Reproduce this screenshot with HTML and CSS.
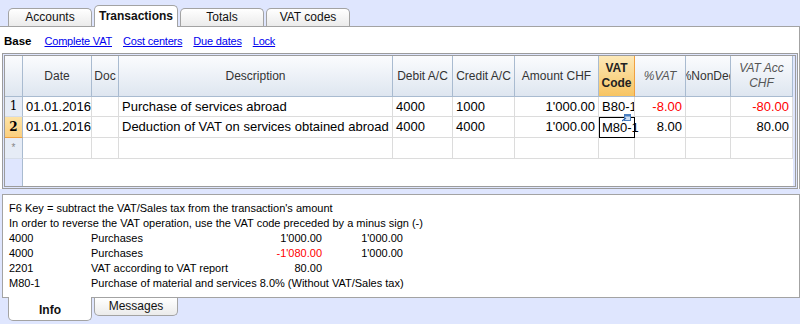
FILE: index.html
```html
<!DOCTYPE html>
<html lang="en">

<head>
    <meta charset="UTF-8">
    <title>Transactions</title>
    <link rel="stylesheet" href="styles.css">
</head>

<body>
    <!-- Pestañas superiores -->
    <div class="tabs top-tabs">
        <div class="tab">Accounts</div>
        <div class="tab active">Transactions</div>
        <div class="tab">Totals</div>
        <div class="tab">VAT codes</div>
    </div>

    <div class="panel">
        <div class="views">
            <b>Base</b>
            <a href="#">Complete VAT</a>
            <a href="#">Cost centers</a>
            <a href="#">Due dates</a>
            <a href="#">Lock</a>
        </div>

        <div class="grid">
            <div class="row head">
                <div class="rn"></div>
                <div class="c">Date</div>
                <div class="c">Doc</div>
                <div class="c">Description</div>
                <div class="c">Debit A/C</div>
                <div class="c">Credit A/C</div>
                <div class="c">Amount CHF</div>
                <div class="c cur">VAT<br>Code</div>
                <div class="c it">%VAT</div>
                <div class="c clip"><span>%NonDed</span></div>
                <div class="c it">VAT Acc<br>CHF</div>
            </div>
            <div class="row">
                <div class="rn">1</div>
                <div class="c">01.01.2016</div>
                <div class="c"></div>
                <div class="c">Purchase of services abroad</div>
                <div class="c">4000</div>
                <div class="c">1000</div>
                <div class="c num">1'000.00</div>
                <div class="c">B80-1</div>
                <div class="c num neg">-8.00</div>
                <div class="c"></div>
                <div class="c num neg">-80.00</div>
            </div>
            <div class="row">
                <div class="rn cur-row">2</div>
                <div class="c">01.01.2016</div>
                <div class="c"></div>
                <div class="c">Deduction of VAT on services obtained abroad</div>
                <div class="c">4000</div>
                <div class="c">4000</div>
                <div class="c num">1'000.00</div>
                <div class="c sel">M80-1
                    <svg class="cell-icon" width="9" height="8" viewBox="0 0 9 8">
                        <rect x="2.5" y="0.5" width="6" height="6" fill="#cfe0f4" stroke="#4a7fc0" />
                        <rect x="3" y="1" width="5" height="1.5" fill="#4a7fc0" />
                        <path d="M0 7 L4 4" stroke="#2a62b0" stroke-width="1.2" />
                    </svg>
                </div>
                <div class="c num">8.00</div>
                <div class="c"></div>
                <div class="c num">80.00</div>
            </div>
            <div class="row">
                <div class="rn star">*</div>
                <div class="c"></div>
                <div class="c"></div>
                <div class="c"></div>
                <div class="c"></div>
                <div class="c"></div>
                <div class="c"></div>
                <div class="c"></div>
                <div class="c"></div>
                <div class="c"></div>
                <div class="c"></div>
            </div>
            <div class="filler">
                <div class="rn"></div>
                <div></div>
            </div>
        </div>
    </div>

    <!-- Panel de información -->
    <div class="info">
        <div class="line">F6 Key = subtract the VAT/Sales tax from the transaction's amount</div>
        <div class="line">In order to reverse the VAT operation, use the VAT code preceded by a minus sign (-)</div>
        <div class="info-row">
            <span>4000</span><span>Purchases</span><span class="num">1'000.00</span><span class="num">1'000.00</span>
        </div>
        <div class="info-row">
            <span>4000</span><span>Purchases</span><span class="num neg">-1'080.00</span><span class="num">1'000.00</span>
        </div>
        <div class="info-row">
            <span>2201</span><span>VAT according to VAT report</span><span class="num">80.00</span><span></span>
        </div>
        <div class="info-row">
            <span>M80-1</span><span class="wide">Purchase of material and services 8.0% (Without VAT/Sales tax)</span>
        </div>
    </div>

    <div class="tabs bottom-tabs">
        <div class="tab active">Info</div>
        <div class="tab">Messages</div>
    </div>
</body>

</html>
```

FILE: styles.css
```css
/* Estilos generales */
body {
    margin: 0;
    background-color: #dfe6fe;
    font-family: 'Liberation Sans', Arial, sans-serif;
    font-size: 11px;
    color: #000;
    width: 800px;
    height: 324px;
    overflow: hidden;
}

/* Pestañas */
.tabs {
    display: flex;
    gap: 2px;
    padding-left: 8px;
}

.top-tabs {
    height: 26px;
    align-items: flex-end;
}

.tab {
    width: 84px;
    box-sizing: border-box;
    border: 1px solid #a3a3a3;
    background: linear-gradient(#ffffff, #ebebeb);
    text-align: center;
    font-size: 12px;
    color: #111;
}

.top-tabs .tab {
    height: 18px;
    line-height: 17px;
    border-bottom: none;
    border-radius: 5px 5px 0 0;
}

.top-tabs .tab.active {
    height: 22px;
    line-height: 20px;
    margin-bottom: -1px;
    background: #fff;
    font-weight: bold;
    font-size: 12px;
    position: relative;
    z-index: 2;
}

/* Panel principal */
.panel {
    background-color: #fff;
    border-top: 1px solid #a3a3a3;
    border-right: 1px solid #a3a3a3;
    width: 799px;
}

.views {
    height: 26px;
    display: flex;
    align-items: center;
    padding-left: 4px;
    padding-top: 1px;
    box-sizing: border-box;
    gap: 11px;
    font-size: 11px;
    letter-spacing: -0.2px;
}

.views b {
    font-size: 11.5px;
    letter-spacing: 0;
    margin-right: 2px;
}

.views a {
    color: #0000ee;
}

/* Tabla de movimientos */
.grid {
    margin-left: 2px;
    width: 796px;
    height: 136px;
    box-sizing: border-box;
    border: 3px double #9c9c9c;
    background-color: #dfe6fe;
}

.row,
.filler {
    display: grid;
    grid-template-columns: 18px 69px 27px 274px 60px 62px 84px 36px 51px 45px 62px;
    height: 21px;
}

.row .c {
    background-color: #fff;
    border-right: 1px solid #dcdcdc;
    border-bottom: 1px solid #dcdcdc;
    box-sizing: border-box;
    font-size: 13px;
    padding: 0 3px;
    line-height: 20px;
    white-space: nowrap;
    overflow: hidden;
}

.row .num {
    text-align: right;
}

.neg {
    color: #ff0000;
}

.rn {
    background-color: #e6ecf6;
    border-right: 1px solid #a9bbd0;
    border-bottom: 1px solid #d6dde8;
    box-sizing: border-box;
    text-align: center;
    font-family: 'DejaVu Serif', serif;
    font-size: 12px;
    line-height: 20px;
}

.rn.star {
    color: #888;
    font-family: 'Liberation Sans', sans-serif;
    font-size: 10px;
}

.rn.cur-row {
    background: linear-gradient(#fde3a6, #fbcf7e);
    border-bottom: 1px solid #f0a040;
    font-weight: bold;
}

.row:nth-child(2) {
    height: 20px;
}

.row:nth-child(2) .c,
.row:nth-child(2) .rn {
    line-height: 19px;
}

.row.head {
    height: 41px;
}

.row.head .c,
.row.head .rn {
    background: linear-gradient(#fbfcfe, #dee6f0);
    border-right: 1px solid #a9bbd0;
    border-bottom: 1px solid #a9bbd0;
    font-size: 12px;
    color: #333;
    line-height: 15px;
    display: flex;
    align-items: center;
    justify-content: center;
    text-align: center;
    padding: 0;
}

.row.head .it {
    font-style: italic;
    color: #555;
}

.row.head .cur {
    background: linear-gradient(#fde9b8, #f7c462);
    border-right: 1px solid #f0a040;
    font-weight: bold;
    color: #222;
}

.row.head .clip span {
    flex-shrink: 0;
}

.row .sel {
    border: 1px solid #000;
    position: relative;
    overflow: visible;
    line-height: 19px;
    padding: 0 2px;
}

.cell-icon {
    position: absolute;
    top: -4px;
    right: 3px;
}

.filler {
    height: 27px;
}

.filler .rn {
    background-color: #dfe6fe;
    border: none;
    border-right: 1px solid #a9bbd0;
}

.filler div:last-child {
    background-color: #fff;
    grid-column: span 10;
}

/* Panel de información */
.info {
    margin-top: 5px;
    margin-left: 2px;
    width: 798px;
    height: 104px;
    box-sizing: border-box;
    background-color: #fff;
    border: 1px solid #a3a3a3;
    padding: 6px 0 0 6px;
}

.line,
.info-row {
    height: 15px;
    line-height: 15px;
    white-space: nowrap;
}

.info-row {
    display: grid;
    grid-template-columns: 82px 150px 81px 81px;
}

.info-row .num {
    text-align: right;
}

.info-row .wide {
    grid-column: span 3;
}

/* Pestañas inferiores */
.bottom-tabs .tab {
    height: 18px;
    line-height: 17px;
    border-top: none;
    border-radius: 0 0 5px 5px;
}

.bottom-tabs .tab.active {
    height: 24px;
    margin-top: -1px;
    line-height: 26px;
    background: #fff;
    font-weight: bold;
    position: relative;
    z-index: 2;
}
```
